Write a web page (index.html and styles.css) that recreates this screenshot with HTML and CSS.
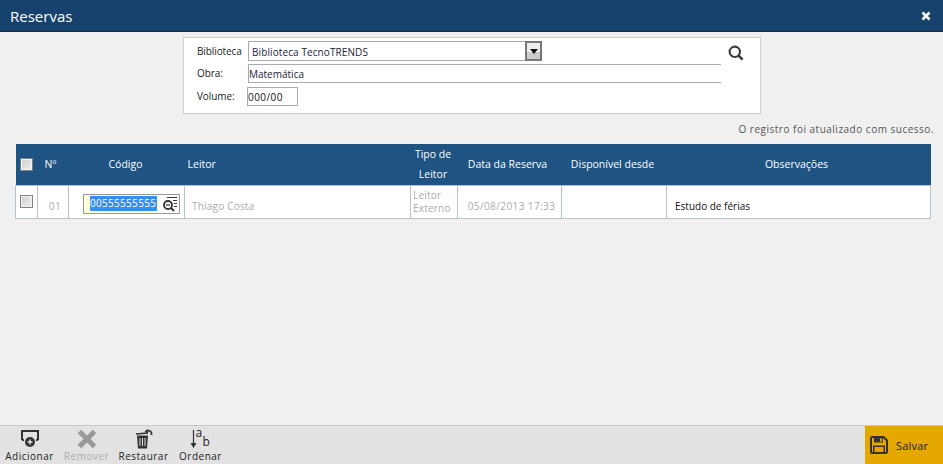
FILE: index.html
```html
<!DOCTYPE html>
<html lang="pt">
<head>
<meta charset="utf-8">
<title>Reservas</title>
<link rel="stylesheet" href="styles.css">
</head>
<body>
<div class="page">
  <header class="titlebar">
    <h1 class="title">Reservas</h1>
    <svg class="close" width="10" height="10" viewBox="0 0 10 10"><path d="M1.5 1.5l7 7M8.500 1.500l-7 7" stroke="#fff" stroke-width="2.6"/></svg>
  </header>
  <main class="content">
    <section class="filter">
      <div class="fields">
        <div class="row row-select">
          <label class="lbl">Biblioteca</label>
          <div class="select"><span class="select-text">Biblioteca TecnoTRENDS</span><span class="select-btn"><svg width="8" height="5" viewBox="0 0 8 5"><path d="M0 0h8L4 5z" fill="#111"/></svg></span></div>
        </div>
        <div class="row row-text">
          <label class="lbl">Obra:</label>
          <div class="line-input">Matemática</div>
        </div>
        <div class="row row-vol">
          <label class="lbl">Volume:</label>
          <div class="vol-input">000/00</div>
        </div>
      </div>
      <svg class="search" width="16" height="16" viewBox="0 0 16 16"><circle cx="6.800" cy="6.800" r="5.200" fill="none" stroke="#3c3c3c" stroke-width="2.100"/><path d="M10.600 10.600l4 4" stroke="#3c3c3c" stroke-width="2.600"/></svg>
    </section>
    <p class="msg">O registro foi atualizado com sucesso.</p>
    <table class="grid">
      <colgroup>
        <col class="c1"><col class="c2"><col class="c3"><col class="c4"><col class="c5"><col class="c6"><col class="c7"><col class="c8">
      </colgroup>
      <thead>
        <tr>
          <th><span class="check head-check"></span></th>
          <th class="left num-head">Nº</th>
          <th class="code-head">Código</th>
          <th class="left">Leitor</th>
          <th class="type-head">Tipo de<br>Leitor</th>
          <th class="date-head">Data da Reserva</th>
          <th class="disp-head">Disponível desde</th>
          <th class="obs-head">Observações</th>
        </tr>
      </thead>
      <tbody>
        <tr>
          <td><span class="check row-check"></span></td>
          <td class="muted num">01</td>
          <td>
            <div class="code">
              <span class="code-val"><span class="sel">00555555555555</span></span>
              <svg class="code-icon" width="16" height="15" viewBox="0 0 16 15"><path d="M5 1h10M11 4h4M12 7h3M12 10h3" stroke="#333" stroke-width="1.200"/><circle cx="6" cy="8.500" r="4" fill="none" stroke="#333" stroke-width="1.800"/><path d="M4 8.500h4" stroke="#333" stroke-width="1.200"/><path d="M9 11.500l3 3" stroke="#333" stroke-width="2"/></svg>
            </div>
          </td>
          <td class="muted name">Thiago Costa</td>
          <td class="muted type">Leitor<br>Externo</td>
          <td class="muted date">05/08/2013 17:33</td>
          <td></td>
          <td class="obs">Estudo de férias</td>
        </tr>
      </tbody>
    </table>
  </main>
  <footer class="toolbar">
    <div class="tools">
      <div class="tool">
        <svg width="22" height="20" viewBox="0 0 22 20"><path d="M3 11V2h16v9M3 11h2M19 11h-2" fill="none" stroke="#333" stroke-width="2"/><circle cx="11" cy="13" r="5" fill="#333"/><path d="M8.500 13h5M11 10.500v5" stroke="#e2e2e2" stroke-width="1.500"/></svg>
        <span>Adicionar</span>
      </div>
      <div class="tool off">
        <svg width="22" height="20" viewBox="0 0 22 20"><path d="M3.500 2.500l15 15M18.500 2.500l-15 15" stroke="#999" stroke-width="5"/></svg>
        <span>Remover</span>
      </div>
      <div class="tool">
        <svg width="22" height="20" viewBox="0 0 22 20"><path d="M4 6.500h11l-1 13H5z" fill="#333"/><path d="M3 5l12-1" stroke="#333" stroke-width="1.600"/><path d="M7 9v8M9.500 9v8M12 9v8" stroke="#e2e2e2"/><path d="M14 2c3-1 5 .5 4.500 4" fill="none" stroke="#333" stroke-width="1.800"/><path d="M11.500 2.200L15 0v5z" fill="#333"/></svg>
        <span>Restaurar</span>
      </div>
      <div class="tool">
        <div class="sort">
          <svg width="7" height="20" viewBox="0 0 7 20"><path d="M3.500 1v15" stroke="#333" stroke-width="1.200"/><path d="M.5 14h6l-3 5z" fill="#333"/></svg>
          <span class="sort-a">a</span><span class="sort-b">b</span>
        </div>
        <span>Ordenar</span>
      </div>
    </div>
    <button class="save">
      <svg width="18" height="18" viewBox="0 0 18 18"><path d="M1 2.500A1.500 1.500 0 0 1 2.500 1h11L17 4.500v11a1.500 1.500 0 0 1-1.500 1.500h-13A1.500 1.500 0 0 1 1 15.500z" fill="none" stroke="#333" stroke-width="2"/><path d="M4 1.500h9v5H4z" fill="#333"/><path d="M10 2.500h2v3h-2z" fill="#e5a800"/><path d="M3 9.500h12V17H3z" fill="#333"/><path d="M4.500 11h9v5h-9z" fill="#e5a800"/></svg>
      <span>Salvar</span>
    </button>
  </footer>
</div>
</body>
</html>
```
FILE: styles.css
```css
* { box-sizing: border-box; }
html, body { margin: 0; height: 100%; }
body { font-family: "Open Sans", "DejaVu Sans", sans-serif; font-size: 10px; color: #222; background: #f0f0f0; overflow: hidden; }
.page { height: 464px; display: flex; flex-direction: column; }

.titlebar { height: 32px; flex: none; background: #16426d; border-bottom: 1px solid #0c2c4c; display: flex; align-items: center; justify-content: space-between; padding: 0 12px 0 10px; }
.title { margin: 0; font-size: 15px; font-weight: 400; color: #fff; }

.content { flex: 1; padding: 5px 9px 0 15px; display: flex; flex-direction: column; }

.filter { align-self: flex-start; margin-left: 168px; width: 578px; height: 77px; background: #fff; border: 1px solid #ccc; display: flex; padding: 3px 0 0 13px; }
.fields { width: 524px; display: flex; flex-direction: column; }
.search { margin: 4px 0 0 7px; }
.row { display: flex; align-items: center; }
.lbl { width: 51px; flex: none; color: #222; letter-spacing: -.1px; }
.row-select { height: 20px; }
.row-select .lbl { padding-bottom: 1px; }
.select { width: 294px; height: 20px; border: 1px solid #aaa; display: flex; align-items: center; justify-content: space-between; padding-left: 3px; color: #1c1c3a; letter-spacing: .1px; }
.select-text { padding-top: 1px; }
.select-btn { width: 17px; height: 20px; margin-right: -1px; border: 2px solid #777; background: linear-gradient(#eee 55%, #ccc 55%); display: flex; align-items: center; justify-content: center; }
.row-text { height: 18px; margin-top: 4px; }
.row-text .lbl { padding-bottom: 2px; }
.line-input { flex: 1; height: 19px; margin-top: -1px; border-top: 1px solid #aaa; border-bottom: 1px solid #aaa; border-left: 1px solid #aaa; line-height: 19px; color: #1c1c3a; }
.row-vol { height: 19px; margin-top: 4px; }
.row-vol .lbl { width: 50px; padding-bottom: 2px; }
.vol-input { width: 51px; height: 19px; border: 1px solid #aaa; line-height: 19px; color: #111; letter-spacing: .45px; }

.msg { margin: 8px 0 0; height: 22px; text-align: right; color: #555; letter-spacing: .5px; line-height: 14px; }

.grid { width: 915px; border-collapse: collapse; table-layout: fixed; }
.c1 { width: 22px; } .c2 { width: 31px; } .c3 { width: 116px; } .c4 { width: 226px; }
.c5 { width: 47px; } .c6 { width: 104px; } .c7 { width: 105px; } .c8 { width: 264px; }
th { background: #1e5382; color: #fff; font-weight: 400; height: 41px; padding: 0; line-height: 20px; text-align: center; font-size: 10.500px; }
th.left { text-align: left; padding-left: 3px; }
th.num-head { padding-left: 7px; }
th.code-head { padding-right: 2px; }
th.type-head { padding-right: 2px; }
th.date-head { padding-right: 4px; }
th.disp-head { padding-right: 3px; }
th.obs-head { padding-right: 4px; }
td { height: 33px; border: 1px solid #b3c3cb; background: #fff; padding: 0; vertical-align: middle; }
.check { display: block; width: 13px; height: 13px; border: 1px solid #808080; background: linear-gradient(135deg, #cfcfcf, #efefef); box-shadow: inset 0 0 0 1px #f4f4f4; }
.head-check { margin-left: 4px; }
.row-check { margin-left: 4px; }
.muted { color: #a9aca8; }
.num { text-align: center; padding-top: 8px; letter-spacing: .6px; padding-left: 4px; }
.name { padding: 8px 0 0 7px; letter-spacing: .2px; }
.type { padding-left: 2px; line-height: 13px; letter-spacing: .2px; }
.date { text-align: center; padding: 8px 0 0 4px; letter-spacing: .4px; }
.obs { color: #111; padding: 8px 0 0 8px; }
.code { width: 97px; height: 20px; margin: 4px 0 0 14px; border: 1px solid #999; background: #ffffd8; display: flex; align-items: center; overflow: hidden; }
.code-val { width: 73px; flex: none; padding-left: 6px; overflow: hidden; white-space: nowrap; letter-spacing: .3px; }
.sel { background: #3390ee; color: #fff; line-height: 15px; display: inline-block; }
.code-icon { flex: none; background: #fff; height: 18px; width: 23px; padding: 1px 2px 1px 5px; }

.toolbar { height: 39px; flex: none; background: #e2e2e2; border-top: 1px solid #c8c8c8; display: flex; justify-content: space-between; }
.tools { display: flex; padding-left: 1px; }
.tool { width: 57px; display: flex; flex-direction: column; align-items: center; padding-top: 3px; letter-spacing: .5px; color: #222; line-height: 14px; height: 38px; }
.tool svg { display: block; }
.tool.off { color: #aaa; }
.sort { position: relative; width: 22px; height: 20px; }
.sort-a, .sort-b { position: absolute; font-size: 12px; line-height: 12px; color: #222; letter-spacing: 0; }
.sort-a { left: 6px; top: -2px; }
.sort-b { left: 13px; top: 7px; }
.save { width: 78px; height: 38px; border: 0; background: #e5a800; display: flex; align-items: center; gap: 8px; padding: 0 0 0 5px; font: inherit; font-size: 11px; letter-spacing: .2px; color: #222; }
```
